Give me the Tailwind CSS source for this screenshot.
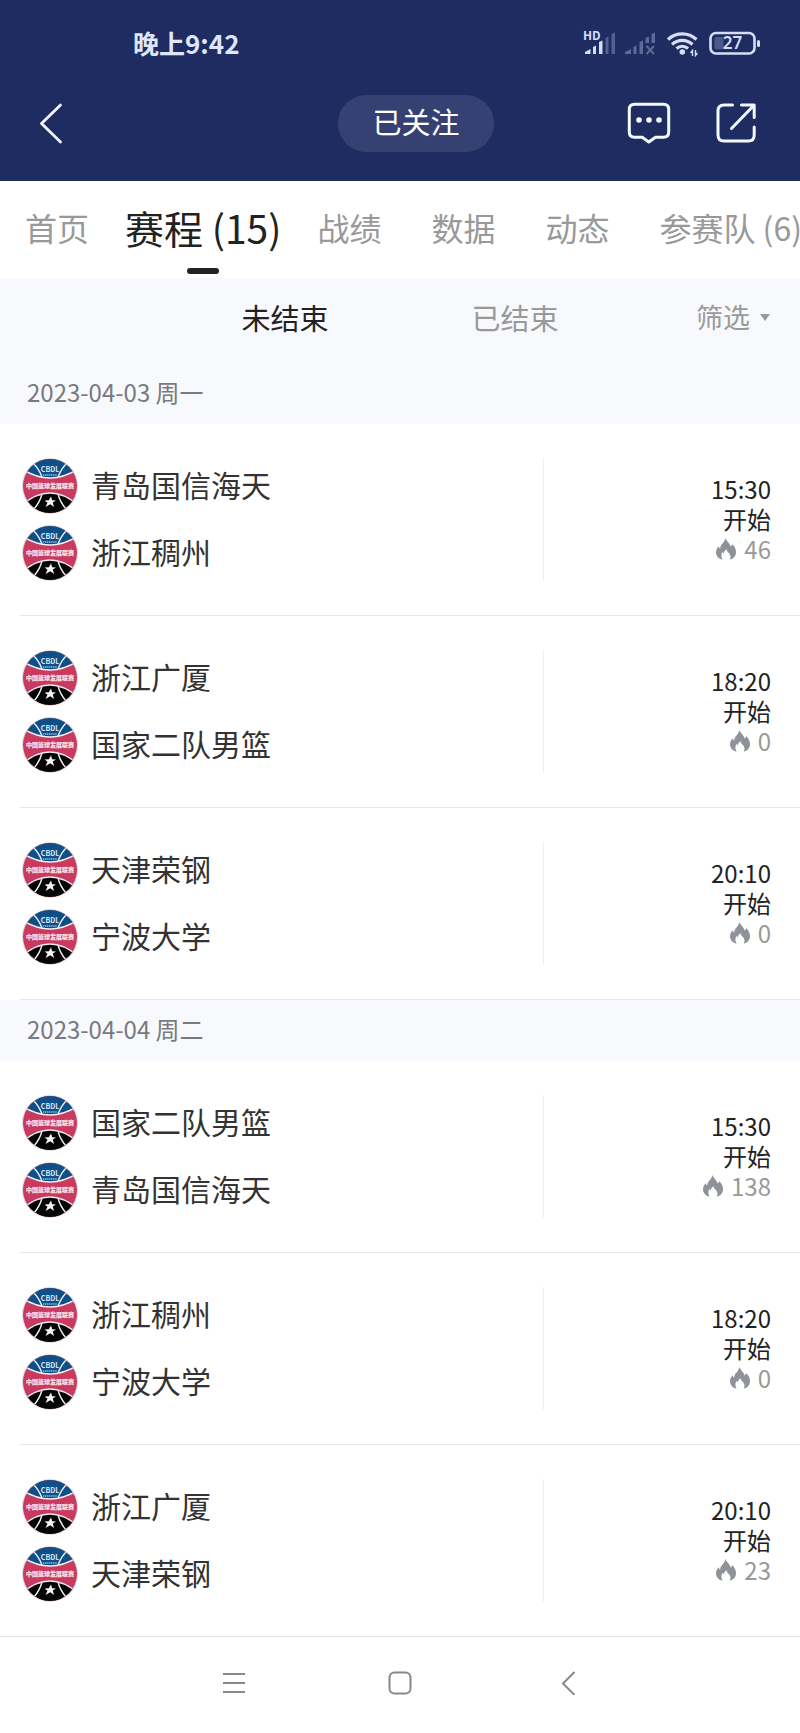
<!DOCTYPE html>
<html lang="zh-CN">
<head>
    <meta charset="UTF-8">
    <meta name="viewport" content="width=device-width, initial-scale=1.0">
    <title>赛程</title>
    <script src="https://cdn.jsdelivr.net/npm/@tailwindcss/browser@4"></script>
</head>
<body class="bg-white font-['Noto_Sans_CJK_SC',sans-serif] text-[#222] overflow-x-hidden">
    <!-- shared shapes -->
    <svg class="absolute w-0 h-0" xmlns="http://www.w3.org/2000/svg">
        <defs>
            <clipPath id="ball"><circle cx="28" cy="28" r="27"/></clipPath>
        </defs>
        <symbol id="logo" viewBox="0 0 56 56">
            <circle cx="28" cy="28" r="28" fill="#dcdcdc"/>
            <g clip-path="url(#ball)">
                <rect width="56" height="56" fill="#c83a5e"/>
                <path d="M0 0H56V11Q42 20 28 20T0 11Z" fill="#0f4f87"/>
                <path d="M0 56H56V47Q42 35 28 35T0 47Z" fill="#050505"/>
                <g fill="none" stroke="#f2eef2" stroke-width="1.4">
                    <path d="M0 11Q14 20 28 20T56 11"/>
                    <path d="M0 47Q14 35 28 35T56 47"/>
                    <path d="M11 5Q17 11 20 19M45 5Q39 11 36 19"/>
                    <path d="M20 36Q18 44 12 51M36 36Q38 44 44 51"/>
                </g>
            </g>
            <text x="28" y="14" font-size="7" font-weight="700" text-anchor="middle" fill="#d6e6f2">CBDL</text>
            <path d="M21 17H35" stroke="#8fb4d0" stroke-width="1.4" stroke-dasharray="1.4 .5"/>
            <text x="28" y="30" font-size="6" font-weight="700" text-anchor="middle" fill="#fbe3ea" stroke="#fbe3ea" stroke-width=".2">中国篮球发展联赛</text>
            <path d="M29 38.500L30.200 42.200L34 42.500L30.800 44.600L32 49L28.300 46.200L23.500 49L25.500 44.800L22.500 42.600L26.800 42.300Z" fill="#f4f4f4"/>
        </symbol>
        <symbol id="flame" viewBox="0 0 20 22">
            <path d="M9.300 0C10.200 2.600 13.400 4.800 14.800 8.600C15.700 7.800 16 7 16 6C18.600 8.300 20 11.200 20 14.200C20 18 17.500 20.700 13.700 21.600C15.300 19.200 14.600 16.500 12.300 14.500C11.400 13.600 10.800 12.600 10.600 11.200C8.500 12.400 7.800 14 7.700 15.400C7 15 6.700 14.400 6.500 13.700C5 16.300 5 19.300 6.600 21.700C2.700 20.800 0 18 0 14.300C0 11.700 1.300 9.800 2.700 8.300C3 9.400 3.400 10.200 4.200 10.700C4 6.300 9 4.500 9.300 0Z" fill="#8f9399"/>
        </symbol>
    </svg>

    <header class="bg-[#1e2c62] text-white pb-[23px]">
        <div class="flex items-center justify-between h-[88px] pl-[133px] pr-10">
            <span class="pb-[2px] text-[26px] leading-[30px] font-bold text-[#dfe6fa]">晚上9:42</span>
            <div class="flex items-center text-[#d5def6]">
                <svg class="w-[31px] h-7 overflow-visible" viewBox="0 0 31 28" fill="currentColor">
                    <text x="-1" y="10" font-size="12" font-weight="700">HD</text>
                    <path d="M1 24V22L6.500 19V24ZM9 24V17L12 15.500V24ZM15 24V12L18.500 10.500V24Z"/>
                    <path d="M21.500 24V8L24.500 6.500V24ZM27.500 24V4L31 2.500V24Z" opacity=".3"/>
                </svg>
                <svg class="w-[30px] h-7 ml-[10px]" viewBox="0 0 30 28" fill="currentColor" opacity=".35">
                    <path d="M0 24V22L6 19V24ZM8.500 24V17L11.500 15.500V24ZM14.500 24V12L18 10.500V24ZM20.500 13V8L24 6.500V13ZM26.500 13V4L30 2.500V13Z"/>
                    <path d="M21.500 16L29 24M29 16L21.500 24" stroke="currentColor" stroke-width="2"/>
                </svg>
                <svg class="w-[31px] h-7 ml-3" viewBox="0 0 31 28" fill="none" stroke="currentColor" stroke-width="3.200">
                    <path d="M1 9.500C9 2 21.500 2 29.500 9.500M5 14.500C11 9 19.500 9 25.500 14.500M9.500 18.500C13 15.500 17.500 15.500 21 18.500"/>
                    <circle cx="15.300" cy="22" r="2.800" fill="currentColor" stroke="none"/>
                    <path d="M25.500 26V20.500L23.500 23M28.500 20V25.500L30.500 23" stroke-width="1.400"/>
                </svg>
                <svg class="w-[51px] h-7 ml-[11px]" viewBox="0 0 51 28">
                    <rect x="1.500" y="3" width="44" height="20.500" rx="5.500" fill="none" stroke="currentColor" stroke-width="2.600"/>
                    <rect x="5.500" y="7" width="9" height="12.500" rx="2" fill="currentColor" opacity=".25"/>
                    <rect x="48" y="10" width="3" height="7" rx="1.500" fill="currentColor"/>
                    <text x="23.500" y="19" font-family="Noto Sans, sans-serif" font-size="17" font-weight="600" text-anchor="middle" fill="currentColor">27</text>
                </svg>
            </div>
        </div>

        <div class="grid grid-cols-[1fr_auto_1fr] items-center h-[70px]">
            <div class="flex">
                <button type="button" aria-label="返回" class="ml-[38px] text-[#f4f8ff]">
                    <svg class="w-[26px] h-[42px]" viewBox="0 0 26 42" fill="none" stroke="currentColor" stroke-width="2.800" stroke-linecap="round" stroke-linejoin="round">
                        <path d="M22.500 3L3.500 21.500L22.500 40"/>
                    </svg>
                </button>
            </div>
            <div class="pl-8">
                <button type="button" class="h-[57px] px-[34px] pb-[3px] rounded-full bg-white/10 text-[29px] leading-none">已关注</button>
            </div>
            <div class="flex justify-end gap-11 pr-[43px] text-[#f4f8ff]">
                <button type="button" aria-label="评论">
                    <svg class="w-11 h-[42px]" viewBox="0 0 44 42" fill="none" stroke="currentColor" stroke-width="3" stroke-linejoin="round">
                        <path d="M7.500 2.300H36.500Q41.700 2.300 41.700 7.500V30Q41.700 35.300 36.500 35.300H28.500L21.800 40L15.200 35.300H7.500Q2.300 35.300 2.300 30V7.500Q2.300 2.300 7.500 2.300Z"/>
                        <g fill="currentColor" stroke="none"><circle cx="12" cy="18" r="2.800"/><circle cx="22" cy="18" r="2.800"/><circle cx="32" cy="18" r="2.800"/></g>
                    </svg>
                </button>
                <button type="button" aria-label="分享">
                    <svg class="w-[42px] h-[42px]" viewBox="0 0 42 42" fill="none" stroke="currentColor" stroke-width="3" stroke-linecap="round" stroke-linejoin="round">
                        <path d="M17.500 3H9Q3 3 3 9V33Q3 39 9 39H33.500Q39.200 39 39.200 33V25"/>
                        <path d="M26.500 3H39.200V15.500M39 3.200L16.500 26.500"/>
                    </svg>
                </button>
            </div>
        </div>
    </header>

    <nav class="flex items-center h-[97px] pb-[6px] overflow-hidden whitespace-nowrap text-[32px] leading-[48px] text-[#999]">
        <a href="#" class="px-[25px]">首页</a>
        <a href="#" class="relative px-[11px] text-[39px] text-[#222]" aria-current="page">
            赛程 (15)
            <span class="absolute left-1/2 -translate-x-1/2 top-[65px] w-8 h-[6px] rounded-full bg-[#222]"></span>
        </a>
        <a href="#" class="px-[25px]">战绩</a>
        <a href="#" class="px-[25px]">数据</a>
        <a href="#" class="px-[25px]">动态</a>
        <a href="#" class="px-[25px]">参赛队 (6)</a>
    </nav>

    <main>
        <div class="grid grid-cols-[1fr_auto_1fr] items-center h-[85px] pb-[6px] bg-[#f8f9fd] text-[29px] text-[#999]">
            <div></div>
            <div class="flex gap-[143px]">
                <button type="button" class="text-[#222]">未结束</button>
                <button type="button">已结束</button>
            </div>
            <div class="flex justify-end pr-[30px]">
                <button type="button" class="flex items-center gap-[10px] text-[27px]">
                    筛选
                    <svg class="w-[10px] h-[7px]" viewBox="0 0 10 7" fill="currentColor"><path d="M0 0H10L5 7Z"/></svg>
                </button>
            </div>
        </div>
        <div id="schedule"></div>
    </main>

    <footer class="flex items-center justify-center gap-[143px] h-[98px] pb-[6px] border-t border-[#e2e2e2] text-[#888]">
        <button type="button" aria-label="菜单">
            <svg class="w-6 h-6" viewBox="0 0 24 24" fill="none" stroke="currentColor" stroke-width="2"><path d="M2 3H24M2 12H24M2 21H24"/></svg>
        </button>
        <button type="button" aria-label="主页">
            <svg class="w-6 h-6" viewBox="0 0 24 24" fill="none" stroke="currentColor" stroke-width="2"><rect x="1.500" y="1.500" width="21" height="21" rx="5"/></svg>
        </button>
        <button type="button" aria-label="后退">
            <svg class="w-6 h-6" viewBox="0 0 24 24" fill="none" stroke="currentColor" stroke-width="2"><path d="M19.500 1L8 12.500L19.500 24"/></svg>
        </button>
    </footer>

    <script>
        const days = [
            { date: '2023-04-03 周一', games: [
                ['青岛国信海天', '浙江稠州', '15:30', 46],
                ['浙江广厦', '国家二队男篮', '18:20', 0],
                ['天津荣钢', '宁波大学', '20:10', 0],
            ]},
            { date: '2023-04-04 周二', games: [
                ['国家二队男篮', '青岛国信海天', '15:30', 138],
                ['浙江稠州', '宁波大学', '18:20', 0],
                ['浙江广厦', '天津荣钢', '20:10', 23],
            ]},
        ];

        function createTeam(name) {
            return `
                <div class="flex items-center gap-[13px] h-14">
                    <svg class="w-14 h-14"><use href="#logo"/></svg>
                    <span class="pb-1">${name}</span>
                </div>
            `;
        }

        function createGame([home, away, time, heat]) {
            return `
                <li class="flex items-stretch ml-5 py-[34px] pl-[2px] pr-[29px] border-b border-[#e8e8e8]">
                    <div class="flex-[522] flex flex-col gap-[11px] border-r border-[#eee] text-[30px] text-[#333]">
                        ${createTeam(home)}
                        ${createTeam(away)}
                    </div>
                    <div class="flex-[227] flex flex-col items-end justify-center pb-[2px] text-2xl leading-[30px]">
                        <span>${time}</span>
                        <span>开始</span>
                        <span class="flex items-center gap-2 text-[#999]">
                            <svg class="w-5 h-[22px]"><use href="#flame"/></svg>${heat}
                        </span>
                    </div>
                </li>
            `;
        }

        document.getElementById('schedule').innerHTML = days.map(day => `
            <section class="group">
                <h2 class="flex items-center h-[61px] pl-[27px] pb-[3px] bg-[#f8f9fd] text-2xl text-[#777a80]">${day.date}</h2>
                <ul class="group-last:[&>li:last-child]:border-b-0">${day.games.map(createGame).join('')}</ul>
            </section>
        `).join('');
    </script>
</body>
</html>
